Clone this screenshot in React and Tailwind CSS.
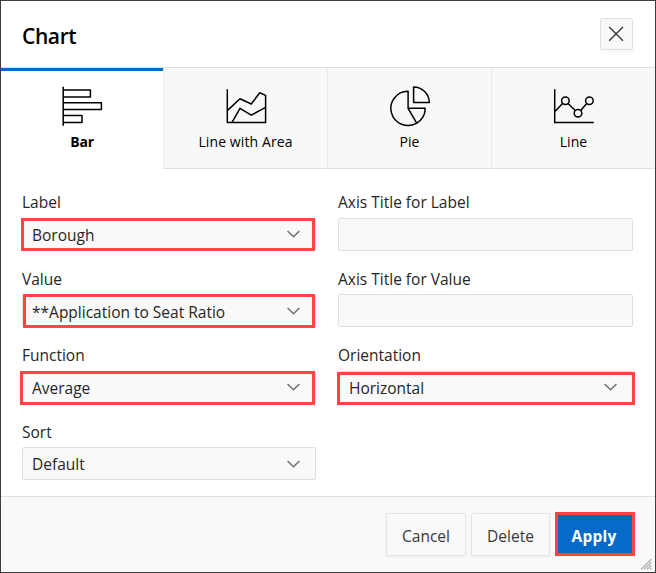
import React from "react";

function BarIcon() {
  return (
    <svg width="42" height="42" viewBox="61 85 42 42" fill="none" stroke="#000" strokeWidth="1.5">
      <path d="M63.2 86.7V125.7" />
      <path d="M63 90H90.4V97H63M63 102.7H101.4V109.6H63M63 115.6H82V122.6H63" strokeLinejoin="round" />
    </svg>
  );
}

function AreaIcon() {
  return (
    <svg width="43" height="42" viewBox="224 85 43 42" fill="none" stroke="#000" strokeWidth="1.5">
      <path d="M227.3 89.3V122.4H265.6V95.4L259.7 92.7L251.3 104L240 98.7L227.6 110.4" strokeLinejoin="round" />
      <path d="M232 122.4L240 108.3L251.3 115.2L265.6 107.4" strokeLinejoin="round" />
    </svg>
  );
}

function PieIcon() {
  return (
    <svg width="43" height="42" viewBox="388 85 43 42" fill="none" stroke="#000" strokeWidth="1.5" strokeLinejoin="round">
      <path d="M408.1 108.3V91.3A17.1 17.1 0 1 0 416.7 123.1Z" />
      <path d="M408.1 108.3H425.2A17.1 17.1 0 0 1 416.7 123.1" />
      <path d="M413.6 102.6V87A15.7 15.7 0 0 1 429.3 102.6Z" />
    </svg>
  );
}

function LineIcon() {
  return (
    <svg width="43" height="42" viewBox="552 85 43 42" fill="none" stroke="#000" strokeWidth="1.5">
      <path d="M554.7 89.3V122.4H593.8" />
      <path d="M555 111.5L562.5 103.6M568.1 103.5L575.2 110.5M580.7 110.5L586.7 103.6" />
      <circle cx="565.4" cy="100.7" r="3.8" />
      <circle cx="578" cy="113.3" r="3.8" />
      <circle cx="589.4" cy="100.7" r="3.8" />
    </svg>
  );
}

function Tab({ icon, children, active, className, labelClass }) {
  return (
    <button
      className={
        "flex h-[101px] flex-col items-center border-b text-[14px] leading-5 text-black " +
        (active ? "border-b-white border-t-[3px] border-t-[#056ac8] bg-white pt-[14px] font-bold " : "border-b-[#dfdfdf] border-l border-l-[#ebebeb] bg-[#f8f8f8] pt-[17px] ") +
        className
      }
    >
      {icon}
      <span className={"mt-[5px] whitespace-nowrap " + labelClass}>{children}</span>
    </button>
  );
}

function Field({ label, value, select, mark, width, labelClass = "-mt-px mb-px", valueClass = "pt-[2px]" }) {
  return (
    <div className={"flex flex-col " + width}>
      <label className={"h-6 whitespace-nowrap text-[15.5px] leading-6 " + labelClass}>{label}</label>
      <div className="relative mt-[3px] flex h-[33px] items-center justify-between rounded-[2px] border border-[#dfdfdf] bg-[#f9f9f9] pl-[9px] pr-[14px]">
        <span className={"whitespace-nowrap text-[15.5px] leading-6 " + valueClass}>{value}</span>
        {select && (
          <svg width="14" height="8" viewBox="0 0 14 8" fill="none" stroke="#707070" strokeWidth="1.5">
            <path d="M0.6 1L6.5 6.8L12.4 1" />
          </svg>
        )}
        {mark && <div className={"absolute border-[3px] border-[#ff4444] " + mark} />}
      </div>
    </div>
  );
}

export default function App() {
  return (
    <div className="flex h-[573px] w-[656px] flex-col border border-[#3d3d3f] bg-white font-['Open_Sans','Noto_Sans',sans-serif] text-[#262626]">
      <header className="flex h-[67px] items-center justify-between border-b border-[#dfdfdf] pl-[21px] pr-[22px]">
        <h1 className="pt-[4px] text-[21px] font-semibold leading-8 tracking-[-0.4px] text-black">Chart</h1>
        <button className="flex h-8 w-[33px] items-center justify-center rounded-[2px] border border-[#dfdfdf] bg-[#f9f9f9] shadow-[0_2px_3px_rgba(0,0,0,0.04)]">
          <svg width="17" height="16" viewBox="0 0 17 16" fill="none" stroke="#404040" strokeWidth="1.5">
            <path d="M1.2 1L15 14.8M15 1L1.2 14.8" />
          </svg>
        </button>
      </header>

      <nav className="flex">
        <Tab active className="w-[162px]" labelClass="tracking-[-0.2px]" icon={<BarIcon />}>Bar</Tab>
        <Tab className="w-[164px]" labelClass="tracking-[0.1px]" icon={<AreaIcon />}>Line with Area</Tab>
        <Tab className="w-[164px]" labelClass="tracking-[0.1px]" icon={<PieIcon />}>Pie</Tab>
        <Tab className="w-[164px]" labelClass="tracking-[0.1px]" icon={<LineIcon />}>Line</Tab>
      </nav>

      <main className="flex h-[327px] flex-col gap-[16.5px] px-[21px] pt-[21.75px]">
        <div className="flex gap-[22px]">
          <Field width="w-[294px]" label="Label" value="Borough" select mark="-left-[2px] right-0 -top-px -bottom-px" />
          <Field width="w-[295px]" label="Axis Title for Label" />
        </div>
        <div className="flex gap-[22px]">
          <Field width="w-[294px]" labelClass="" label="Value" value="**Application to Seat Ratio" select mark="left-0 right-0 -top-px -bottom-[2px]" />
          <Field width="w-[295px]" labelClass="" label="Axis Title for Value" />
        </div>
        <div className="flex gap-[22px]">
          <Field width="w-[294px]" label="Function" value="Average" select mark="-left-[3px] right-0 -top-px -bottom-[2px]" />
          <Field width="w-[295px]" label="Orientation" value="Horizontal" select valueClass="pl-px pt-[2px]" mark="-left-[2px] -right-[3px] top-0 -bottom-[2px]" />
        </div>
        <div className="flex gap-[22px]">
          <Field width="w-[294px]" labelClass="" label="Sort" value="Default" select valueClass="" />
        </div>
      </main>

      <footer className="relative flex h-[76px] gap-[5px] border-t border-[#dfdfdf] bg-[#f9f9f9] pl-[385px] pt-4 text-[15.5px] text-[#383838]">
        <button className="h-[43px] w-[80px] rounded-[2px] border border-[#e4e4e4] pt-[5px] shadow-[0_2px_3px_rgba(0,0,0,0.04)]">Cancel</button>
        <button className="h-[43px] w-[79px] rounded-[2px] border border-[#e4e4e4] pt-[5px] shadow-[0_2px_3px_rgba(0,0,0,0.04)]">Delete</button>
        <button className="-mt-px h-[44px] w-[80px] border-[3px] border-[#ff4444] bg-[#056ac8] pr-[2px] pt-[5px] font-bold tracking-[0.2px] text-white">Apply</button>
        <svg className="absolute bottom-[2px] right-[3px]" width="12" height="12" viewBox="0 0 12 12" stroke="#b4b4b4" strokeWidth="1.4">
          <path d="M1 11.5L11.5 1M4 11.5L11.5 4M7 11.5L11.5 7M10 11.5L11.5 10" />
        </svg>
      </footer>
    </div>
  );
}
